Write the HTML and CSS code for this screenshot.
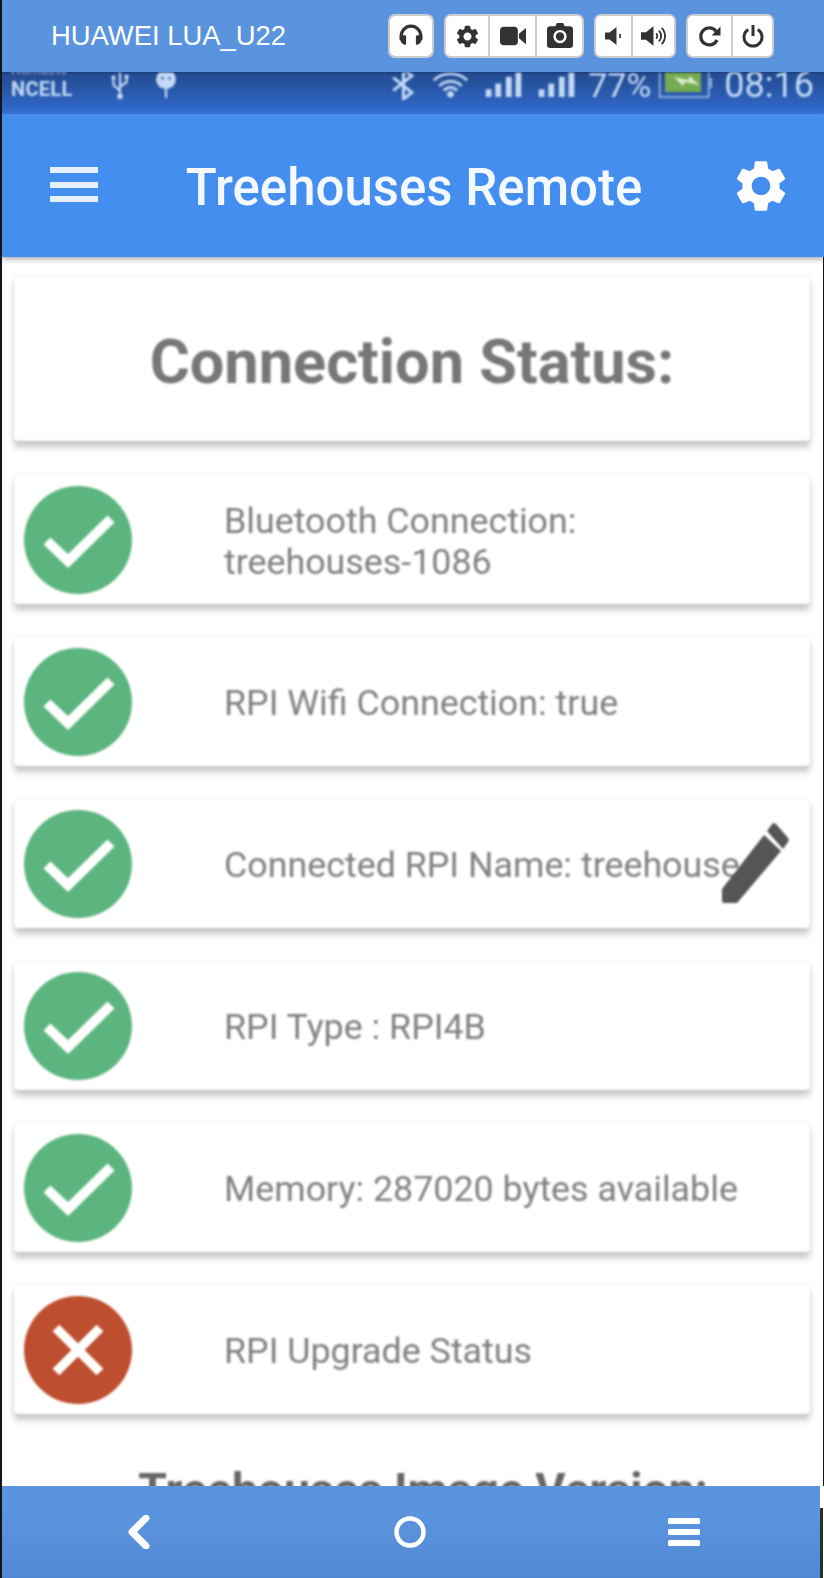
FILE: index.html
```html
<!DOCTYPE html>
<html lang="en">
<head>
<meta charset="utf-8">
<title>HUAWEI LUA_U22</title>
<link rel="stylesheet" href="styles.css">
</head>
<body>
<div class="device">
  <header class="topbar">
    <div class="device-name">HUAWEI LUA_U22</div>
    <div class="controls">
      <div class="btn-group">
        <button class="btn"><svg class="ic ic-head" viewBox="0 0 24 24"><path d="M3.600 15.500V12a8.400 8.400 0 0 1 16.800 0v3.500" fill="none" stroke="#333" stroke-width="2.800"/><path d="M2.300 13c0-1 1-1.700 2-1.700h2.400c.7 0 1.100.5 1.100 1.100v6.300c0 .7-.7 1.100-1.300.8-2.500-1-4.200-3.500-4.200-6.500zM21.700 13c0-1-1-1.700-2-1.700h-2.400c-.7 0-1.100.5-1.100 1.100v6.300c0 .7.7 1.100 1.300.8 2.500-1 4.200-3.500 4.200-6.500z" fill="#333"/></svg></button>
      </div>
      <div class="btn-group">
        <button class="btn"><svg class="ic ic-gear" viewBox="0 0 24 24"><path fill="#333" d="M19.140 12.940c.04-.3.06-.61.06-.94 0-.32-.02-.64-.07-.94l2.030-1.580c.18-.14.23-.41.12-.61l-1.920-3.320c-.12-.22-.37-.29-.59-.22l-2.390.96c-.5-.38-1.030-.7-1.620-.94l-.36-2.540c-.04-.24-.24-.41-.48-.41h-3.840c-.24 0-.43.17-.47.41l-.36 2.540c-.59.24-1.130.57-1.620.94l-2.390-.96c-.22-.08-.47 0-.59.22L2.740 8.870c-.12.21-.08.47.12.61l2.030 1.580c-.05.3-.09.63-.09.94s.02.64.07.94l-2.030 1.580c-.18.14-.23.41-.12.61l1.920 3.320c.12.22.37.29.59.22l2.390-.96c.5.38 1.030.7 1.620.94l.36 2.540c.05.24.24.41.48.41h3.840c.24 0 .44-.17.47-.41l.36-2.540c.59-.24 1.130-.56 1.620-.94l2.390.96c.22.08.47 0 .59-.22l1.920-3.320c.12-.22.07-.47-.12-.61l-2.010-1.580zM12 15.600c-1.980 0-3.600-1.620-3.600-3.600s1.620-3.600 3.600-3.600 3.600 1.620 3.600 3.600-1.620 3.600-3.600 3.600z"/></svg></button>
        <button class="btn"><svg class="ic ic-wide" viewBox="0 0 24 24"><rect x="0" y="3.500" width="16.500" height="17" rx="3.500" fill="#333"/><path d="M17.500 10l6.500-5.500v15L17.500 14z" fill="#333"/></svg></button>
        <button class="btn"><svg class="ic ic-wide" viewBox="0 0 24 24"><path fill="#333" d="M7.800 3l1.300-3h5.800l1.300 3H21a3 3 0 0 1 3 3v14a3 3 0 0 1-3 3H3a3 3 0 0 1-3-3V6a3 3 0 0 1 3-3z"/><circle cx="12" cy="12.500" r="5" fill="none" stroke="#fff" stroke-width="2.200"/></svg></button>
      </div>
      <div class="btn-group">
        <button class="btn btn-vol"><svg class="ic" viewBox="0 0 24 24"><path fill="#333" d="M3 8.500h4.500L14.500 3v18l-7-5.500H3z"/><path d="M17.500 10a3 3 0 0 1 0 4" fill="none" stroke="#333" stroke-width="1.600"/></svg></button>
        <button class="btn btn-volup"><svg class="ic ic-wide" viewBox="0 0 24 24"><path fill="#333" d="M0 8.500h4.500L11.500 3v18l-7-5.500H0z"/><path d="M14 9.500a3.500 3.500 0 0 1 0 5M16.500 7a7 7 0 0 1 0 10M19 4.500a10.500 10.500 0 0 1 0 15" fill="none" stroke="#333" stroke-width="1.700"/></svg></button>
      </div>
      <div class="btn-group">
        <button class="btn btn-redo"><svg class="ic" viewBox="0 0 24 24"><path d="M19 16a8.500 8.500 0 1 1-.8-8.500" fill="none" stroke="#333" stroke-width="3.200"/><path d="M22.500 2.500v9h-9z" fill="#333"/></svg></button>
        <button class="btn btn-power"><svg class="ic" viewBox="0 0 24 24"><path d="M7.200 5.500a9 9 0 1 0 9.600 0" fill="none" stroke="#333" stroke-width="3"/><path d="M12 1v11" stroke="#333" stroke-width="3"/></svg></button>
      </div>
    </div>
  </header>

  <div class="statusbar">
    <div class="carrier"><span class="carrier-top">Namaste</span><span class="carrier-name">NCELL</span></div>
    <svg class="st-usb" viewBox="0 0 20 30"><path d="M10 0v26M10 20L3 14V8M10 16l7-5V6" fill="none" stroke="currentColor" stroke-width="2.400"/><circle cx="10" cy="26" r="3" fill="currentColor"/><rect x="1" y="4" width="4" height="4" fill="currentColor"/><circle cx="17" cy="5" r="2.400" fill="currentColor"/></svg>
    <svg class="st-pin" viewBox="0 0 24 30"><circle cx="12" cy="8" r="11" fill="currentColor"/><path d="M12 18v11" stroke="currentColor" stroke-width="2.500"/><circle cx="8" cy="7" r="1.500" fill="#3a65ad"/><circle cx="16" cy="7" r="1.500" fill="#3a65ad"/></svg>
    <div class="status-right">
      <svg class="st-bt" viewBox="0 0 28 30"><path d="M3 6l20 16-9 7V-3l9 7L3 20" fill="none" stroke="currentColor" stroke-width="3.200"/></svg>
      <svg class="st-wifi" viewBox="0 0 40 28"><path d="M2 9a26 26 0 0 1 36 0M8 15a17 17 0 0 1 24 0M13 20a9 9 0 0 1 14 0" fill="none" stroke="currentColor" stroke-width="3"/><circle cx="20" cy="24" r="3.500" fill="currentColor"/></svg>
      <svg class="st-signal" viewBox="0 0 37 26"><rect x="0" y="18" width="6" height="8" fill="currentColor"/><rect x="10" y="12" width="6" height="14" fill="currentColor"/><rect x="21" y="5" width="6" height="21" fill="currentColor"/><rect x="31" y="0" width="6" height="26" fill="currentColor"/></svg>
      <svg class="st-signal" viewBox="0 0 37 26"><rect x="0" y="18" width="6" height="8" fill="currentColor"/><rect x="10" y="12" width="6" height="14" fill="currentColor"/><rect x="21" y="5" width="6" height="21" fill="currentColor"/><rect x="31" y="0" width="6" height="26" fill="currentColor"/></svg>
      <span class="st-pct">77%</span>
      <svg class="st-batt" viewBox="0 0 53 26"><rect x=".7" y="-4" width="49" height="29" fill="none" stroke="currentColor" stroke-width="1.200"/><rect x="6" y="-4" width="36" height="24" fill="#76ab52"/><path d="M15 5l14 3 2-4 9 9-14-3-2 4z" fill="#d8ecd0"/><path d="M52 6v10" stroke="currentColor" stroke-width="1.500"/></svg>
      <span class="st-time">08:16</span>
    </div>
  </div>

  <div class="appbar">
    <svg class="menu-icon" viewBox="0 0 48 36"><path d="M0 0h48v6H0zM0 15h48v6H0zM0 29h48v6H0z" fill="#e6f1fd"/></svg>
    <h1 class="app-title">Treehouses Remote</h1>
    <svg class="settings-icon" viewBox="0 0 24 24"><path fill="#fff" d="M19.140 12.940c.04-.3.06-.61.06-.94 0-.32-.02-.64-.07-.94l2.030-1.580c.18-.14.23-.41.12-.61l-1.920-3.320c-.12-.22-.37-.29-.59-.22l-2.390.96c-.5-.38-1.030-.7-1.620-.94l-.36-2.540c-.04-.24-.24-.41-.48-.41h-3.840c-.24 0-.43.17-.47.41l-.36 2.540c-.59.24-1.130.57-1.620.94l-2.390-.96c-.22-.08-.47 0-.59.22L2.740 8.870c-.12.21-.08.47.12.61l2.030 1.580c-.05.3-.09.63-.09.94s.02.64.07.94l-2.030 1.580c-.18.14-.23.41-.12.61l1.920 3.320c.12.22.37.29.59.22l2.390-.96c.5.38 1.030.7 1.620.94l.36 2.540c.05.24.24.41.48.41h3.840c.24 0 .44-.17.47-.41l.36-2.540c.59-.24 1.130-.56 1.620-.94l2.390.96c.22.08.47 0 .59-.22l1.920-3.320c.12-.22.07-.47-.12-.61l-2.010-1.580zM12 15.600c-1.980 0-3.600-1.620-3.600-3.600s1.620-3.600 3.600-3.600 3.600 1.620 3.600 3.600-1.620 3.600-3.600 3.600z"/></svg>
  </div>

  <main class="content">
    <section class="card card-title"><h2 class="heading">Connection Status:</h2></section>

    <section class="card row">
      <svg class="state" viewBox="0 0 108 108"><circle cx="54" cy="54" r="54" fill="#5cb57f"/><path d="M23 55l21 20 43-42" fill="none" stroke="#fff" stroke-width="10"/></svg>
      <p class="row-text">Bluetooth Connection:<br>treehouses-1086</p>
    </section>
    <section class="card row">
      <svg class="state" viewBox="0 0 108 108"><circle cx="54" cy="54" r="54" fill="#5cb57f"/><path d="M23 55l21 20 43-42" fill="none" stroke="#fff" stroke-width="10"/></svg>
      <p class="row-text">RPI Wifi Connection: true</p>
    </section>
    <section class="card row">
      <svg class="state" viewBox="0 0 108 108"><circle cx="54" cy="54" r="54" fill="#5cb57f"/><path d="M23 55l21 20 43-42" fill="none" stroke="#fff" stroke-width="10"/></svg>
      <p class="row-text">Connected RPI Name: treehouse</p>
      <svg class="pencil" viewBox="0 0 70 82"><path fill="#555" d="M2 66L44 12 61 28 17 80H4a2 2 0 0 1-2-2zM47 8l5-7c1-1 3-1 4 0l12 14c1 1 1 3 0 4l-5 7z"/></svg>
    </section>
    <section class="card row">
      <svg class="state" viewBox="0 0 108 108"><circle cx="54" cy="54" r="54" fill="#5cb57f"/><path d="M23 55l21 20 43-42" fill="none" stroke="#fff" stroke-width="10"/></svg>
      <p class="row-text">RPI Type : RPI4B</p>
    </section>
    <section class="card row">
      <svg class="state" viewBox="0 0 108 108"><circle cx="54" cy="54" r="54" fill="#5cb57f"/><path d="M23 55l21 20 43-42" fill="none" stroke="#fff" stroke-width="10"/></svg>
      <p class="row-text">Memory: 287020 bytes available</p>
    </section>
    <section class="card row">
      <svg class="state" viewBox="0 0 108 108"><circle cx="54" cy="54" r="54" fill="#bd4f30"/><path d="M32 32l44 44M76 32L32 76" fill="none" stroke="#fff" stroke-width="9.500"/></svg>
      <p class="row-text">RPI Upgrade Status</p>
    </section>

    <h2 class="heading heading-next">Treehouses Image Version:</h2>
  </main>

  <div class="nav-wrap">
    <nav class="navbar">
      <svg class="nav-back" viewBox="0 0 24 34"><path d="M19 3L5 17l14 14" fill="none" stroke="#fff" stroke-width="7" stroke-linejoin="round" stroke-linecap="round"/></svg>
      <svg class="nav-home" viewBox="0 0 32 32"><circle cx="16" cy="16" r="13.500" fill="none" stroke="#fff" stroke-width="4.500"/></svg>
      <svg class="nav-menu" viewBox="0 0 32 28"><rect y="0" width="32" height="6" rx="1.500" fill="#fff"/><rect y="11" width="32" height="6" rx="1.500" fill="#fff"/><rect y="22" width="32" height="6" rx="1.500" fill="#fff"/></svg>
    </nav>
    <div class="nav-edge"></div>
  </div>
</div>
</body>
</html>
```
FILE: styles.css
```css
* { box-sizing: border-box; }
html, body { margin: 0; padding: 0; background: #fff; }
.device {
  width: 824px;
  height: 1578px;
  display: flex;
  flex-direction: column;
  overflow: hidden;
  border-left: 2px solid #141414;
  font-family: Roboto, "Liberation Sans", sans-serif;
}

/* top control bar */
.topbar {
  flex: 0 0 72px;
  display: flex;
  align-items: flex-start;
  padding: 14px 0 0 49px;
  background: #5b94de;
  position: relative;
  z-index: 2;
  box-shadow: 0 1px 2px rgba(20,40,90,.4);
}
.device-name {
  font-family: "Liberation Sans", Arial, sans-serif;
  font-size: 27.4px;
  line-height: 43px;
  color: #fff;
  width: 337px;
  white-space: nowrap;
}
.controls { display: flex; gap: 10px; }
.btn-group {
  display: flex;
  height: 44px;
  background: #fff;
  border: 2px solid #ccc;
  border-radius: 7px;
  overflow: hidden;
}
.btn {
  width: 47px;
  padding: 0;
  border: 0;
  border-left: 2px solid #ccc;
  background: #fff;
  display: flex;
  align-items: center;
  justify-content: center;
}
.btn:first-child { border-left: 0; width: 42px; }
.btn-vol:first-child { width: 35px; }
.btn-volup { width: 43px; }
.btn-redo:first-child { width: 43px; }
.btn-power { width: 41px; }
.ic { width: 24px; height: 24px; display: block; flex: none; }
.ic-wide { width: 26px; height: 26px; }
.ic-head { width: 28px; height: 28px; }
.ic-gear { width: 27px; height: 27px; }

/* phone status bar */
.statusbar {
  flex: 0 0 42px;
  display: flex;
  align-items: flex-start;
  overflow: hidden;
  padding-left: 9px;
  background: linear-gradient(#234a8e 0, #2f67c6 37px, #3a78dc 41px);
  color: #c4daf6;
}
.carrier, .st-usb, .st-pin, .status-right { filter: blur(.9px); }
.carrier { display: flex; flex-direction: column; width: 88px; font-weight: 700; margin-top: -11px; }
.carrier-top { font-size: 14px; line-height: 16px; opacity: .7; }
.carrier-name { font-size: 20px; line-height: 24px; letter-spacing: .3px; }
.st-usb { width: 20px; height: 28px; margin: 0 0 0 11px; }
.st-pin { width: 22px; height: 27px; margin-left: 25px; }
.status-right { display: flex; align-items: flex-start; margin-left: auto; padding-right: 10px; }
.st-bt { width: 27px; height: 28px; margin-right: 13px; }
.st-wifi { width: 41px; height: 26px; margin-right: 14px; }
.st-signal { width: 37px; height: 25px; margin-right: 16px; }
.st-signal + .st-pct { margin-left: -3px; }
.st-pct, .st-time { line-height: 26px; font-weight: 400; }
.st-pct { font-size: 34px; }
.st-time { font-size: 36px; }
.st-batt { width: 53px; height: 26px; margin: 0 12px 0 8px; }

/* app header */
.appbar {
  flex: 0 0 143px;
  display: flex;
  align-items: center;
  padding: 0 38px 0 48px;
  background: #448ef0;
  position: relative;
  z-index: 1;
  box-shadow: 0 2px 6px rgba(0,0,0,.35);
}
.appbar > * { filter: blur(.7px); }
.menu-icon { width: 48px; height: 36px; flex: none; margin-top: -2px; }
.app-title {
  flex: 1;
  margin: 0;
  padding-top: 4px;
  text-align: center;
  font-size: 51px;
  font-weight: 500;
  color: #f4f9ff;
  line-height: 56px;
  white-space: nowrap;
}
.settings-icon { width: 62px; height: 62px; flex: none; margin: 0 -6px 0 0; }

/* content */
.content {
  flex: 1;
  min-height: 0;
  overflow: hidden;
  display: flex;
  flex-direction: column;
  gap: 33px;
  padding: 19px 13px 0 12px;
  border-right: 1px solid #141414;
}
.content > * { filter: blur(.8px); }
.card {
  flex: none;
  background: #fff;
  border-radius: 4px;
  box-shadow: 0 0 2px rgba(0,0,0,.16), 0 6px 6px rgba(0,0,0,.22);
}
.card-title {
  height: 165px;
  display: flex;
  align-items: center;
  justify-content: center;
  margin-bottom: 1px;
  padding-top: 6px;
}
.heading {
  margin: 0;
  font-size: 61.300px;
  font-weight: 700;
  color: #777;
  line-height: 72px;
  white-space: nowrap;
  text-align: center;
}
.row {
  height: 129px;
  display: flex;
  align-items: center;
  gap: 92px;
  padding-left: 10px;
  position: relative;
}
.state { width: 108px; height: 108px; flex: none; }
.row-text {
  margin: 0;
  padding-top: 4px;
  font-size: 35.8px;
  line-height: 41px;
  color: #808080;
  white-space: nowrap;
}
.pencil {
  position: absolute;
  top: 24px;
  right: 20px;
  width: 70px;
  height: 82px;
}
.heading-next {
  flex: none;
  color: #666;
  font-size: 46.300px;
  line-height: 50px;
  margin-top: 18px;
  padding-left: 22px;
}

/* bottom nav */
.nav-wrap { flex: 0 0 92px; display: flex; position: relative; z-index: 2; }
.navbar {
  flex: 1;
  display: flex;
  align-items: center;
  justify-content: space-between;
  padding: 0 120px 0 125px;
  background: linear-gradient(#5b94de 30%, #5288d4);
}
.nav-edge { flex: 0 0 4px; margin-top: 22px; background: #2c2c2c; border-right: 1px solid #fff; }
.nav-back { width: 24px; height: 34px; }
.nav-home { width: 32px; height: 32px; }
.nav-menu { width: 32px; height: 28px; }
```
